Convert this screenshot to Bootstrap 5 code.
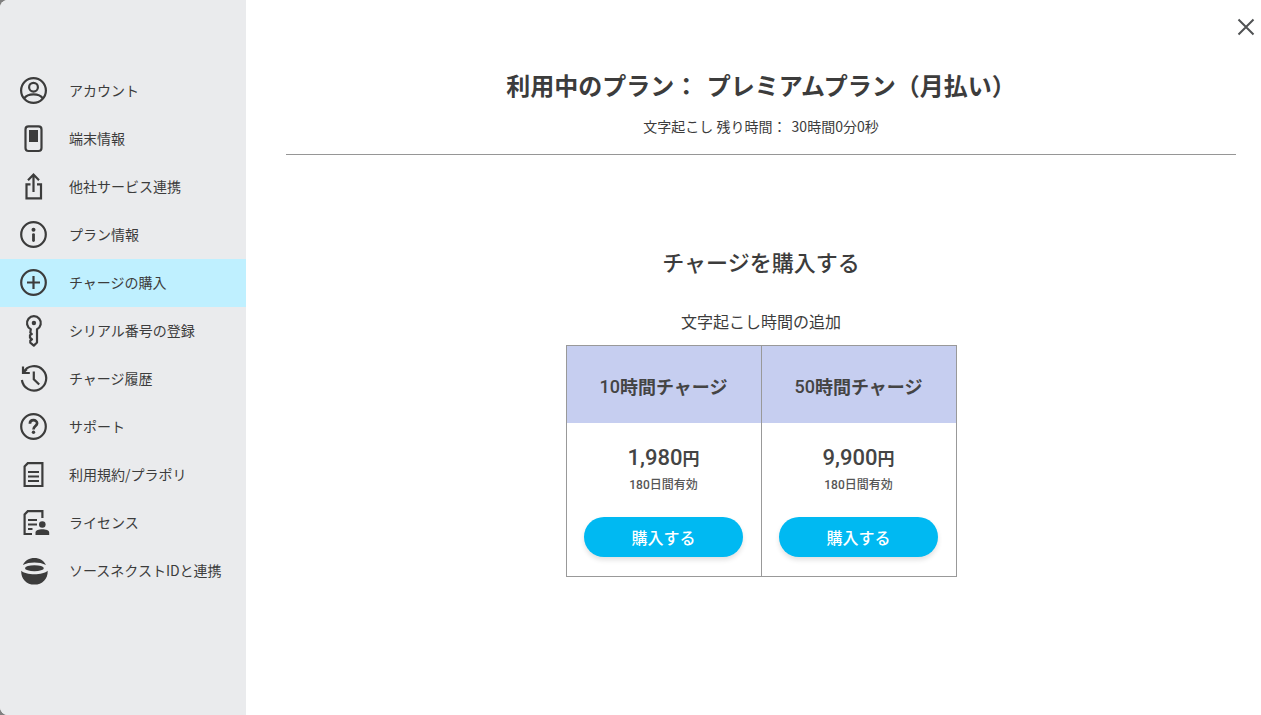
<!DOCTYPE html>
<html lang="ja">
<head>
<meta charset="utf-8">
<meta name="viewport" content="width=device-width, initial-scale=1">
<title>チャージの購入</title>
<link href="https://cdn.jsdelivr.net/npm/bootstrap@5.3.0/dist/css/bootstrap.min.css" rel="stylesheet">
<style>
  body { font-family: "Noto Sans CJK JP", sans-serif; color: #3c3c3c; background: #808080; font-size: 14px; }
  .shell { background: #fff; border-radius: 8px 0 0 8px; overflow: hidden; }
  .side { width: 246px; background: #eaebed; padding-top: 67px; }
  .side-link { height: 48px; padding: 0 20px; gap: 21px; color: #3c3c3c; }
  .side-link span { padding-bottom: 1px; }
  .side-link:hover { color: #3c3c3c; background: #dff5fb; }
  .side-link.active { background: #bff0ff; }
  .side-link svg { width: 28px; height: 28px; overflow: visible; fill: none; stroke: #3c3c3c; stroke-width: 2.2; }
  .side-link .solid { fill: #3c3c3c; stroke: none; }
  .pane { padding: 67px 25px 40px 40px; }
  .plan-head { border-bottom: 1px solid #969696; padding-bottom: 17px; margin-bottom: 90px; }
  .plan-title { font-size: 24px; line-height: 36px; font-weight: 700; margin-bottom: 13px; }
  .plan-time { line-height: 21px; }
  .plan-title span { margin-left: 3px; }
  .plan-time span { margin-left: 2px; }
  .buy-title { font-size: 22px; line-height: 33px; font-weight: 500; margin-bottom: 31px; }
  .buy-sub { font-size: 16px; line-height: 24px; margin-bottom: 12px; }
  .offers { width: 391px; max-width: 100%; border: 1px solid #999; }
  .offers > * + * { border-left: 1px solid #999; }
  .offer-name { height: 77px; background: #c6cef0; font: 700 18px/27px "Noto Sans CJK JP", sans-serif; color: #444; padding-top: 4px; }
  .offer-name span, .price span { font-family: Roboto, sans-serif; font-weight: 500; }
  .offer-body { padding: 18px 16px 19px; }
  .price { font: 700 17px/33px "Noto Sans CJK JP", sans-serif; color: #444; }
  .price span { font-size: 22px; }
  .valid { font: 500 12px/18px Roboto, "Noto Sans CJK JP", sans-serif; color: #555; margin-bottom: 23px; padding-top: 2px; }
  .btn-buy { --bs-btn-color: #fff; --bs-btn-bg: #00b9f2; --bs-btn-hover-color: #fff; --bs-btn-hover-bg: #00a5da; --bs-btn-active-color: #fff; --bs-btn-active-bg: #0096c8;
    width: 159px; height: 40px; font-size: 16px; line-height: 24px; font-weight: 500; box-shadow: 0 3px 5px rgba(0,0,0,.12); }
  .close-x { top: 16px; right: 4px; width: 22px; height: 22px; }
</style>
</head>
<body>
<div class="shell d-flex min-vh-100 position-relative">
  <nav class="side flex-shrink-0" aria-label="設定メニュー">
    <a class="side-link d-flex align-items-center text-decoration-none" href="#">
      <svg viewBox="0 0 28 28" aria-hidden="true"><circle cx="13.5" cy="13.5" r="12.4"/><circle cx="13.5" cy="10.2" r="4.4"/><path d="M4.2 21.4C6 18.6 9.5 17.4 13.5 17.4s7.5 1.2 9.3 4"/></svg>
      <span>アカウント</span></a>
    <a class="side-link d-flex align-items-center text-decoration-none" href="#">
      <svg viewBox="0 0 28 28" aria-hidden="true"><rect x="5.5" y="1.4" width="16" height="24.6" rx="3"/><path class="solid" d="M9 5h9v12H9z"/></svg>
      <span>端末情報</span></a>
    <a class="side-link d-flex align-items-center text-decoration-none" href="#">
      <svg viewBox="0 0 28 28" aria-hidden="true"><path d="M10.5 11.4h-4v14H21v-14h-4M13.5 19V1.5M8 7.2l5.5-5.7L19 7.2"/></svg>
      <span>他社サービス連携</span></a>
    <a class="side-link d-flex align-items-center text-decoration-none" href="#">
      <svg viewBox="0 0 28 28" aria-hidden="true"><circle cx="13.5" cy="13.5" r="12.3"/><circle class="solid" cx="13.5" cy="8.8" r="2"/><path stroke-width="2.8" stroke-linecap="round" d="M13.5 13.6v6"/></svg>
      <span>プラン情報</span></a>
    <a class="side-link active d-flex align-items-center text-decoration-none" href="#" aria-current="page">
      <svg viewBox="0 0 28 28" aria-hidden="true"><circle cx="13.5" cy="13.5" r="12.3"/><path d="M7 13.5h13M13.5 7v13"/></svg>
      <span>チャージの購入</span></a>
    <a class="side-link d-flex align-items-center text-decoration-none" href="#">
      <svg viewBox="0 0 28 28" aria-hidden="true"><path stroke-width="2.2" stroke-linejoin="round" d="M10.800 12.200A6.900 6.900 0 1 1 17 12.200V25.500L13.800 28.600 10.300 25.700V23.500L12 22.300 10 20.700V18.200L11.800 17 10.300 15.700z"/><circle class="solid" cx="13.900" cy="6" r="2.200"/></svg>
      <span>シリアル番号の登録</span></a>
    <a class="side-link d-flex align-items-center text-decoration-none" href="#">
      <svg viewBox="0 0 28 28" aria-hidden="true"><path d="M1.900 15A12.200 12.200 0 1 0 3.300 7.500M3 1.500V8h6.800M13.800 6.500v7.700l5.400 5.300M3 8l3.800-3.700"/></svg>
      <span>チャージ履歴</span></a>
    <a class="side-link d-flex align-items-center text-decoration-none" href="#">
      <svg viewBox="0 0 28 28" aria-hidden="true"><circle cx="13.500" cy="13.500" r="12.300"/><path stroke-width="2.700" d="M9.900 10.800C9.900 5.900 17.100 6.200 17.100 10.300 17.100 13 13.500 13.200 13.500 16.500"/><circle class="solid" cx="13.500" cy="19.200" r="1.700"/></svg>
      <span>サポート</span></a>
    <a class="side-link d-flex align-items-center text-decoration-none" href="#">
      <svg viewBox="0 0 28 28" aria-hidden="true"><path d="M7.800 2.200H22.400V25H4.600V5.500zM8 11h11M8 15.500h11M8 20h11"/></svg>
      <span>利用規約/プラポリ</span></a>
    <a class="side-link d-flex align-items-center text-decoration-none" href="#">
      <svg viewBox="0 0 28 28" aria-hidden="true"><path d="M22.400 9V2.200H7.800L4.600 5.500V25H12M8 11h9M8 15.500h9M8 20h4.500"/><circle class="solid" cx="22.300" cy="15.500" r="3.300"/><path class="solid" d="M15.500 26v-2.500c0-2 3.300-3.200 6.800-3.200s6.900 1.200 6.900 3.200V26z"/></svg>
      <span>ライセンス</span></a>
    <a class="side-link d-flex align-items-center text-decoration-none" href="#">
      <svg viewBox="0 0 28 28" aria-hidden="true"><path class="solid" d="M2.800 8C5 3.200 9.300.9 14.400.9S23.800 3.200 26 8C19.500 4.700 9.300 4.700 2.800 8z"/><ellipse class="solid" cx="14.400" cy="11.200" rx="9.400" ry="3"/><path class="solid" d="M1.200 13.700c4 4.600 22.400 4.600 26.500 0 .3 8.200-5.400 13.900-13.300 13.900S.9 21.900 1.200 13.700z"/></svg>
      <span>ソースネクストIDと連携</span></a>
  </nav>

  <main class="pane flex-grow-1 text-center">
    <header class="plan-head">
      <h1 class="plan-title">利用中のプラン： <span>プレミアムプラン（月払い）</span></h1>
      <p class="plan-time mb-0">文字起こし 残り時間： <span>30時間0分0秒</span></p>
    </header>
    <section>
      <h2 class="buy-title">チャージを購入する</h2>
      <p class="buy-sub">文字起こし時間の追加</p>
      <div class="offers row g-0 mx-auto">
        <article class="col">
          <h3 class="offer-name d-flex align-items-center justify-content-center mb-0"><span>10</span>時間チャージ</h3>
          <div class="offer-body">
            <p class="price mb-0"><span>1,980</span>円</p>
            <p class="valid">180日間有効</p>
            <button type="button" class="btn btn-buy rounded-pill border-0">購入する</button>
          </div>
        </article>
        <article class="col">
          <h3 class="offer-name d-flex align-items-center justify-content-center mb-0"><span>50</span>時間チャージ</h3>
          <div class="offer-body">
            <p class="price mb-0"><span>9,900</span>円</p>
            <p class="valid">180日間有効</p>
            <button type="button" class="btn btn-buy rounded-pill border-0">購入する</button>
          </div>
        </article>
      </div>
    </section>
  </main>

  <button type="button" class="close-x btn p-0 border-0 position-absolute d-flex" aria-label="閉じる">
    <svg viewBox="0 0 22 22" width="22" height="22" fill="none" stroke="#505254" stroke-width="2" aria-hidden="true"><path d="M3.500 3.500l15 15M18.500 3.500l-15 15"/></svg>
  </button>
</div>
<script src="https://cdn.jsdelivr.net/npm/bootstrap@5.3.0/dist/js/bootstrap.bundle.min.js"></script>
</body>
</html>
